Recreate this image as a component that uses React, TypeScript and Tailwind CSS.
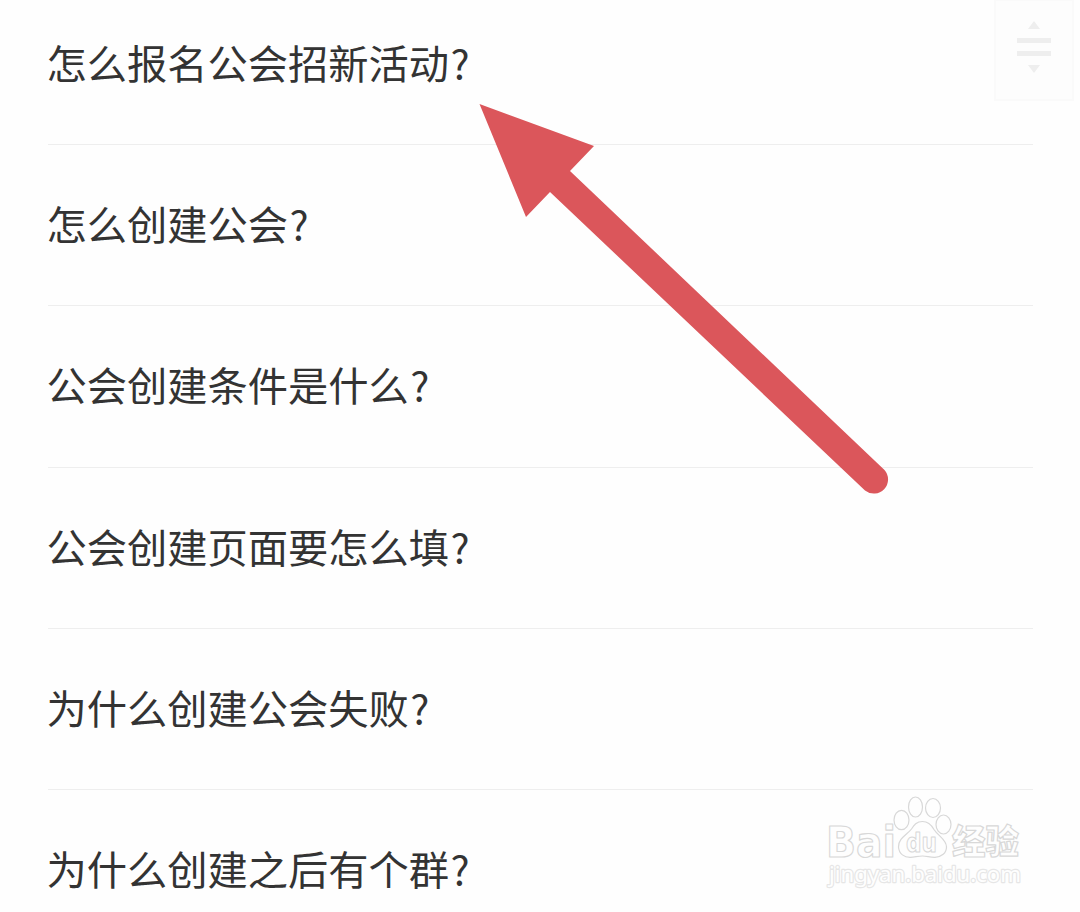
const questions = [
  '怎么报名公会招新活动',
  '怎么创建公会',
  '公会创建条件是什么',
  '公会创建页面要怎么填',
  '为什么创建公会失败',
  '为什么创建之后有个群',
];

function Watermark() {
  return (
    <svg
      className="absolute left-[810px] top-[785px]"
      width="230"
      height="115"
      viewBox="0 0 230 115"
      fill="#fefefe"
      stroke="#d8d8d8"
      strokeWidth="1.2"
      strokeLinejoin="round"
    >
      <text
        x="16"
        y="71.500"
        fontSize="43"
        fontFamily="'DejaVu Sans', sans-serif"
        fontWeight="700"
        textLength="70"
        lengthAdjust="spacingAndGlyphs"
      >
        Bai
      </text>
      <ellipse cx="91.5" cy="35" rx="7.5" ry="9.7" />
      <ellipse cx="105.5" cy="22" rx="7" ry="10" />
      <ellipse cx="123" cy="23" rx="7.5" ry="9.5" />
      <ellipse cx="133.5" cy="39.5" rx="7.5" ry="9.5" />
      <path d="M112.5 36.500c-6 0-8.500 3.500-11 7.500-4 5.500-13.500 9.500-13 18 .4 7 6 10.500 12 10.300 4.500-.2 7.500-1.300 12-1.300s7.500 1.500 12.500 1.300c6.500-.2 11.500-4.300 11.500-10.300 0-7.500-8.500-11-12.500-17.500-2.500-4.500-5.500-8-11.500-8z" />
      <text
        x="96"
        y="67"
        fontSize="26"
        fontFamily="'DejaVu Sans', sans-serif"
        fontWeight="700"
        strokeWidth="1.1"
        textLength="31"
        lengthAdjust="spacingAndGlyphs"
      >
        du
      </text>
      <text
        x="142"
        y="69"
        fontSize="34"
        fontFamily="'Noto Sans CJK SC', sans-serif"
        fontWeight="900"
        strokeWidth="1.2"
        textLength="67"
        lengthAdjust="spacingAndGlyphs"
      >
        经验
      </text>
      <text
        x="19"
        y="97"
        fontSize="22"
        fontFamily="'Noto Sans', sans-serif"
        strokeWidth="2.4"
        stroke="#e6e6e6"
        paintOrder="stroke"
        textLength="192"
        lengthAdjust="spacingAndGlyphs"
      >
        jingyan.baidu.com
      </text>
    </svg>
  );
}

export default function App() {
  return (
    <main className="relative h-[912px] w-[1080px] overflow-hidden bg-[#fefefe] font-['Noto_Sans_CJK_SC',sans-serif] text-[#333333]">
      <ul className="-mt-[16.3px] flex flex-col pl-12 pr-[47px]">
        {questions.map((question) => (
          <li
            key={question}
            className="flex h-[161.3px] shrink-0 items-center border-b border-[#eeeeee] pb-[4.4px] text-[40.25px] leading-[60px]"
          >
            <span className="-ml-[1.5px]">
              {question}
              <span className="ml-[1.5px]">?</span>
            </span>
          </li>
        ))}
      </ul>

      <div className="absolute -top-px left-[994px] flex h-[102px] w-[80px] justify-center border-2 border-[#fafafa] bg-[#fdfdfd]">
        <svg className="-mt-px" width="76" height="100" viewBox="996 0 76 100" fill="#eeeeee">
          <path d="M1034 21l6 8h-12z" />
          <path d="M1017 38h34v5h-34zM1017 51h34v5h-34z" />
          <path d="M1028 65h12l-6 8z" />
        </svg>
      </div>

      <svg className="absolute left-0 top-0" width="1080" height="912" viewBox="0 0 1080 912">
        <path
          d="M479.500 104L594 146L570 171L884.500 470A14.200 14.200 0 0 1 865 490.500L550 192L526 217Z"
          fill="#db565b"
        />
      </svg>

      <Watermark />
    </main>
  );
}
